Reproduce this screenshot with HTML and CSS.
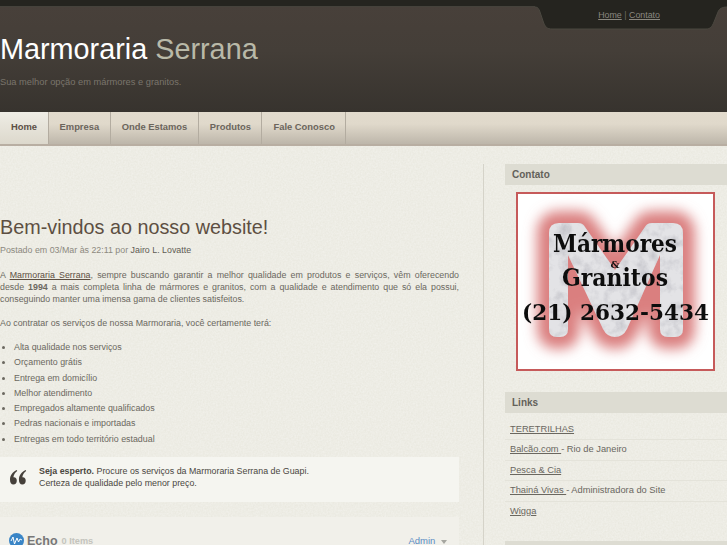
FILE: index.html
```html
<!DOCTYPE html>
<html lang="pt-BR">
<head>
    <meta charset="UTF-8">
    <title>Marmoraria Serrana</title>
    <link rel="stylesheet" href="styles.css">
</head>
<body>

<div class="header">
    <svg class="top-tab" xmlns="http://www.w3.org/2000/svg" width="192" height="31" viewBox="0 0 192 31">
        <path d="M0 7 C3 7 4 9 5 12 L8 21 C10 27 12 29 17 29 L171 29 C175 29 177 27 179 22 L183 12 C184 9 187 7 192 7 L192 0 L0 0 Z" fill="#25241f"></path>
        <path d="M0 7 C3 7 4 9 5 12 L8 21 C10 27 12 29 17 29 L171 29 C175 29 177 27 179 22 L183 12 C184 9 187 7 192 7" fill="none" stroke="#4b4840"></path>
    </svg>
    <div class="top-links">
        <a href="#">Home</a> <span class="sep">|</span> <a href="#">Contato</a>
    </div>
    <h1 class="logo">Marmoraria <span>Serrana</span></h1>
    <p class="slogan">Sua melhor opção em mármores e granitos.</p>
</div>

<ul class="nav">
    <li class="active"><a href="#">Home</a></li>
    <li><a href="#">Empresa</a></li>
    <li><a href="#">Onde Estamos</a></li>
    <li><a href="#">Produtos</a></li>
    <li><a href="#">Fale Conosco</a></li>
</ul>

<div class="content">
    <div class="main">
        <h2 class="post-title">Bem-vindos ao nosso website!</h2>
        <p class="post-meta">Postado em 03/Mar às 22:11 por <b>Jairo L. Lovatte</b></p>

        <p class="text">A <a href="#">Marmoraria Serrana</a>, sempre buscando garantir a melhor qualidade em produtos e serviços, vêm oferecendo desde <b>1994</b> a mais completa linha de mármores e granitos, com a qualidade e atendimento que só ela possui, conseguindo manter uma imensa gama de clientes satisfeitos.</p>
        <p class="text">Ao contratar os serviços de nossa Marmoraria, você certamente terá:</p>

        <ul class="list">
            <li>Alta qualidade nos serviços</li>
            <li>Orçamento grátis</li>
            <li>Entrega em domicílio</li>
            <li>Melhor atendimento</li>
            <li>Empregados altamente qualificados</li>
            <li>Pedras nacionais e importadas</li>
            <li>Entregas em todo território estadual</li>
        </ul>

        <div class="quote">
            <svg class="quote-mark" xmlns="http://www.w3.org/2000/svg" width="17" height="15" viewBox="0 0 20 16" preserveAspectRatio="none">
                <path d="M8 0 C3 2 0 6 0 10 C0 13.500 1.500 15.500 4 15.500 C6.500 15.500 8 14 8 11.500 C8 9 6.500 7.500 4 7.800 C4.300 5 6 2.500 8.500 1 Z"></path>
                <path d="M18.500 0 C13.500 2 10.500 6 10.500 10 C10.500 13.500 12 15.500 14.500 15.500 C17 15.500 18.500 14 18.500 11.500 C18.500 9 17 7.500 14.500 7.800 C14.800 5 16.500 2.500 19 1 Z"></path>
            </svg>
            <p><b>Seja esperto.</b> Procure os serviços da Marmoraria Serrana de Guapi.<br>Certeza de qualidade pelo menor preço.</p>
        </div>

        <div class="echo">
            <svg class="echo-icon" xmlns="http://www.w3.org/2000/svg" width="15" height="15" viewBox="0 0 15 15">
                <circle cx="7.500" cy="7.500" r="7.500" fill="#3a85c6"></circle>
                <path d="M2 8 L4 4 L5.500 11 L8 5 L9.500 9 L11 6 L13 7" fill="none" stroke="#fff" stroke-width="1"></path>
            </svg>
            <span class="echo-name">Echo</span>
            <span class="echo-count">0 Items</span>
            <a class="echo-admin" href="#">Admin <i class="caret"></i></a>
        </div>
    </div>

    <div class="sidebar">
        <h3 class="side-title">Contato</h3>
        <div class="side-image">
            <svg xmlns="http://www.w3.org/2000/svg" width="199" height="179" viewBox="0 0 199 179">
                <defs>
                    <filter id="glow" x="-30%" y="-30%" width="160%" height="160%">
                        <feGaussianBlur stdDeviation="6.500"></feGaussianBlur>
                    </filter>
                    <filter id="soft" x="-5%" y="-5%" width="110%" height="110%">
                        <feGaussianBlur stdDeviation="0.500"></feGaussianBlur>
                    </filter>
                    <filter id="textblur" x="-5%" y="-20%" width="110%" height="140%">
                        <feGaussianBlur stdDeviation="0.400"></feGaussianBlur>
                    </filter>
                    <filter id="marble" x="0" y="0" width="100%" height="100%">
                        <feTurbulence type="fractalNoise" baseFrequency=".09" numOctaves="4" seed="4"></feTurbulence>
                        <feColorMatrix values="0 0 0 0 .52 0 0 0 0 .52 0 0 0 0 .56 1.800 0 0 0 -.75"></feColorMatrix>
                        <feComposite in2="SourceGraphic" operator="in"></feComposite>
                    </filter>
                </defs>
                <rect x="1" y="1" width="197" height="177" fill="#fff" stroke="#c65a5a" stroke-width="2"></rect>
                <path d="M33 41 Q33 31 43 31 L62 31 Q67 31 69 35 L99 78 L129 35 Q131 31 136 31 L157 31 Q167 31 167 41 L167 137 Q167 145 159 145 L152 145 Q144 145 144 137 L144 63 L111 137 Q107 145 99 145 Q91 145 87 137 L52 63 L52 137 Q52 145 44 145 L41 145 Q33 145 33 137 Z" fill="#da7f7f" stroke="#da7f7f" stroke-width="24" stroke-linejoin="round" filter="url(#glow)"></path>
                <path d="M33 41 Q33 31 43 31 L62 31 Q67 31 69 35 L99 78 L129 35 Q131 31 136 31 L157 31 Q167 31 167 41 L167 137 Q167 145 159 145 L152 145 Q144 145 144 137 L144 63 L111 137 Q107 145 99 145 Q91 145 87 137 L52 63 L52 137 Q52 145 44 145 L41 145 Q33 145 33 137 Z" fill="#e3e3e6" filter="url(#soft)"></path>
                <path d="M33 41 Q33 31 43 31 L62 31 Q67 31 69 35 L99 78 L129 35 Q131 31 136 31 L157 31 Q167 31 167 41 L167 137 Q167 145 159 145 L152 145 Q144 145 144 137 L144 63 L111 137 Q107 145 99 145 Q91 145 87 137 L52 63 L52 137 Q52 145 44 145 L41 145 Q33 145 33 137 Z" fill="#000" filter="url(#marble)"></path>
                <g filter="url(#textblur)">
                    <text class="img-text" x="99" y="60" font-size="24" textLength="124" lengthAdjust="spacingAndGlyphs">Mármores</text>
                    <text class="img-text" x="99" y="76" font-size="10">&amp;</text>
                    <text class="img-text" x="99" y="94" font-size="24" textLength="106" lengthAdjust="spacingAndGlyphs">Granitos</text>
                    <text class="img-text" x="99.500" y="128" font-size="22" textLength="187" lengthAdjust="spacingAndGlyphs">(21) 2632-5434</text>
                </g>
            </svg>
        </div>

        <h3 class="side-title links-title">Links</h3>
        <ul class="links">
            <li><a href="#">TERETRILHAS</a></li>
            <li><a href="#">Balcão.com </a> - Rio de Janeiro</li>
            <li><a href="#">Pesca &amp; Cia</a></li>
            <li><a href="#">Thainá Vivas </a> - Administradora do Site</li>
            <li><a href="#">Wigga</a></li>
        </ul>
        <div class="side-next"></div>
    </div>
</div>

</body>
</html>
```

FILE: styles.css
```css
html, body {
    margin: 0;
    padding: 0;
    height: 545px;
    overflow: hidden;
}
body {
    background-color: #eae9e0;
    background-image: url("data:image/svg+xml,%3Csvg xmlns='http://www.w3.org/2000/svg' width='200' height='200'%3E%3Cfilter id='n'%3E%3CfeTurbulence type='fractalNoise' baseFrequency='.6' numOctaves='2'/%3E%3CfeColorMatrix values='0 0 0 0 1 0 0 0 0 1 0 0 0 0 1 0 0 0 .5 -.1'/%3E%3C/filter%3E%3Crect width='200' height='200' filter='url(%23n)'/%3E%3C/svg%3E");
    color: #6b6860;
    font-family: "Liberation Sans", Arial, sans-serif;
    font-size: 8.85px;
}
a {
    color: inherit;
}

/* cabecalho */
.header {
    position: relative;
    height: 112px;
    box-sizing: border-box;
    padding-top: 33px;
    background: linear-gradient(#48403a 0, #443e38 45px, #37332e 100%);
    border-top: 6px solid #25241f;
    box-shadow: inset 0 1px 0 #45423b;
}
.top-tab {
    position: absolute;
    top: -6px;
    right: 0;
}
.top-links {
    position: absolute;
    top: 4px;
    right: 67px;
    color: #6f6b62;
    font-size: 8.85px;
}
.top-links a {
    color: #8b8880;
}
.logo {
    margin: 0;
    color: #fff;
    font-size: 28.8px;
    font-weight: normal;
    line-height: 20px;
}
.logo span {
    color: #b9b9a8;
}
.slogan {
    margin: 17px 0 0;
    color: #7a756c;
    font-size: 9.3px;
    line-height: 12px;
}

/* menu */
.nav {
    display: flex;
    height: 32px;
    margin: 0;
    padding: 0;
    list-style: none;
    background: linear-gradient(#e2dbcd 0, #e0d9cb 12px, #bdb6aa 100%);
    border-bottom: 2px solid #b8aea2;
}
.nav li {
    border-right: 1px solid #b3aca0;
}
.nav a {
    display: block;
    padding: 0 10.5px 0 11px;
    color: #6b655c;
    font-size: 9.4px;
    font-weight: bold;
    line-height: 30px;
    text-decoration: none;
}
.nav .active {
    background: linear-gradient(#efede5, #dcd8cc);
}
.nav .active a {
    color: #5c4f45;
}

/* conteudo */
.content {
    display: flex;
    padding-top: 18px;
}
.main {
    width: 459px;
    padding-top: 50px;
    margin-right: 24px;
    box-sizing: border-box;
}
.post-title {
    margin: 0;
    color: #5d4f42;
    font-size: 19.8px;
    font-weight: normal;
    line-height: 26px;
}
.post-meta {
    margin: 4px 0 0;
    color: #8c897f;
    line-height: 12px;
}
.post-meta b {
    color: #5f5c54;
    font-weight: normal;
}
.text {
    margin: 0 0 12px;
    line-height: 12px;
    text-align: justify;
}
.post-meta + .text {
    margin-top: 13px;
}
.text a {
    color: #5d4f42;
}
.list {
    margin: -1px 0 10px;
    padding: 0 0 0 14px;
    line-height: 15.300px;
}
.quote {
    display: flex;
    gap: 12px;
    height: 45px;
    box-sizing: border-box;
    padding: 8px 0 0 10px;
    background: #f5f5f0;
}
.quote-mark {
    fill: #45403a;
    margin-top: 5px;
}
.quote p {
    margin: 0;
    color: #4a473f;
    line-height: 12px;
}
.echo {
    display: flex;
    align-items: center;
    height: 40px;
    margin-top: 15px;
    padding: 7px 12px 0 9px;
    box-sizing: border-box;
    background: #f1f0ea;
}
.echo-icon {
    margin-right: 3px;
}
.echo-name {
    color: #777;
    font-size: 12.5px;
    font-weight: bold;
}
.echo-count {
    margin-left: 4px;
    color: #c4c4bd;
    font-size: 9.2px;
    font-weight: bold;
}
.echo-admin {
    margin-left: auto;
    color: #5b8cc4;
    font-size: 9.5px;
    text-decoration: none;
}
.caret {
    display: inline-block;
    margin-left: 3px;
    border-top: 4px solid #a6a6a0;
    border-left: 3.500px solid transparent;
    border-right: 3.500px solid transparent;
}

/* barra lateral */
.sidebar {
    flex: 1;
    padding-left: 21px;
    border-left: 1px solid #d5d3c9;
}
.side-title {
    margin: 0;
    padding-left: 7px;
    background: #dddcd2;
    color: #63615a;
    font-size: 10px;
    font-weight: bold;
    line-height: 21px;
}
.side-image {
    margin: 7px 0 0 11px;
    height: 179px;
}
.side-image svg {
    display: block;
}
.img-text {
    fill: #111;
    font-family: "DejaVu Serif", serif;
    font-weight: bold;
    text-anchor: middle;
}
.links-title {
    margin-top: 21px;
}
.links {
    margin: 7px 0 0;
    padding: 0;
    list-style: none;
    font-size: 9.3px;
    color: #6a675f;
}
.links li {
    padding-left: 5px;
    line-height: 19.400px;
    border-bottom: 1px solid #e4e3da;
}
.links li:last-child {
    border-bottom: 0;
}
.side-next {
    height: 21px;
    margin-top: 20px;
    background: #dddcd2;
}
```
